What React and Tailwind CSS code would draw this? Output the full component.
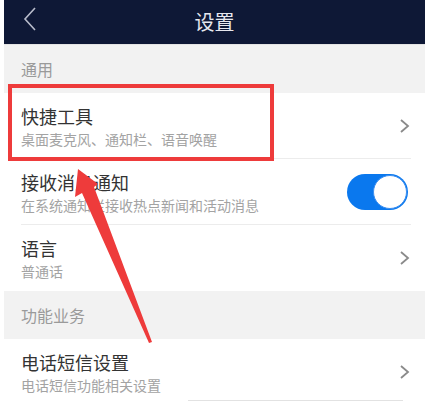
import React from 'react';

const font = { fontFamily: '"Noto Sans CJK SC", "Noto Sans", sans-serif' };

const Chevron = () => (
  <svg width="12" height="16" viewBox="0 0 12 16" className="shrink-0">
    <path d="M2 2 L9 8 L2 14" fill="none" stroke="#8a8a8a" strokeWidth="1.8" />
  </svg>
);

const Row = ({ title, sub, right, last }) => (
  <div className={`h-[66px] ml-[17px] mr-[14px] flex items-center justify-between ${last ? '' : 'border-b border-[#ececec]'}`}>
    <div className="flex flex-col">
      <span className="text-[18px] leading-[26px] text-[#333]">{title}</span>
      <span className="text-[14px] leading-[20px] text-[#a3a3a3]">{sub}</span>
    </div>
    {right}
  </div>
);

const Section = ({ label }) => (
  <div className="h-[48px] bg-[#f2f2f2] pl-[17px] flex items-center text-[16px] text-[#9a9a9a]">{label}</div>
);

const Toggle = () => (
  <div className="w-[61px] h-[36px] rounded-full bg-[#0a78ee] p-[1px] flex justify-end mr-[3px]">
    <div className="w-[34px] h-[34px] rounded-full bg-white border border-[#3d8ff0]"></div>
  </div>
);

export default function App() {
  return (
    <div className="w-[425px] h-[402px] bg-white pl-1 overflow-hidden relative" style={font}>
      <div className="h-[44px] bg-[#0e1836] relative flex items-center justify-center">
        <svg width="14" height="24" viewBox="0 0 14 24" className="absolute left-[19px] top-[7px]">
          <path d="M12 1 L2 12 L12 23" fill="none" stroke="#b8bccb" strokeWidth="1.6" />
        </svg>
        <span className="text-[20px] text-[#e6e7ee]">设置</span>
      </div>
      <div className="h-[1px] bg-[#e4e4e4]"></div>
      <Section label="通用" />
      <Row title="快捷工具" sub="桌面麦克风、通知栏、语音唤醒" right={<Chevron />} />
      <Row title="接收消息通知" sub="在系统通知栏接收热点新闻和活动消息" right={<Toggle />} />
      <Row title="语言" sub="普通话" right={<Chevron />} last />
      <Section label="功能业务" />
      <Row title="电话短信设置" sub="电话短信功能相关设置" right={<Chevron />} last />

      {/* red highlight box */}
      <div className="absolute left-[8px] top-[84px] w-[266px] h-[77px] border-[4px] border-[#ee3b3b]"></div>

      {/* arrow */}
      <svg width="425" height="402" className="absolute left-0 top-0 pointer-events-none">
        <polygon points="78,169 98,184 94,187 152,342 149,343 82,193 75,197" fill="#ee3b3b" />
      </svg>

      <div className="absolute left-[188px] top-[400px] w-[215px] h-[1px] bg-[#e2e2e2]"></div>
    </div>
  );
}
